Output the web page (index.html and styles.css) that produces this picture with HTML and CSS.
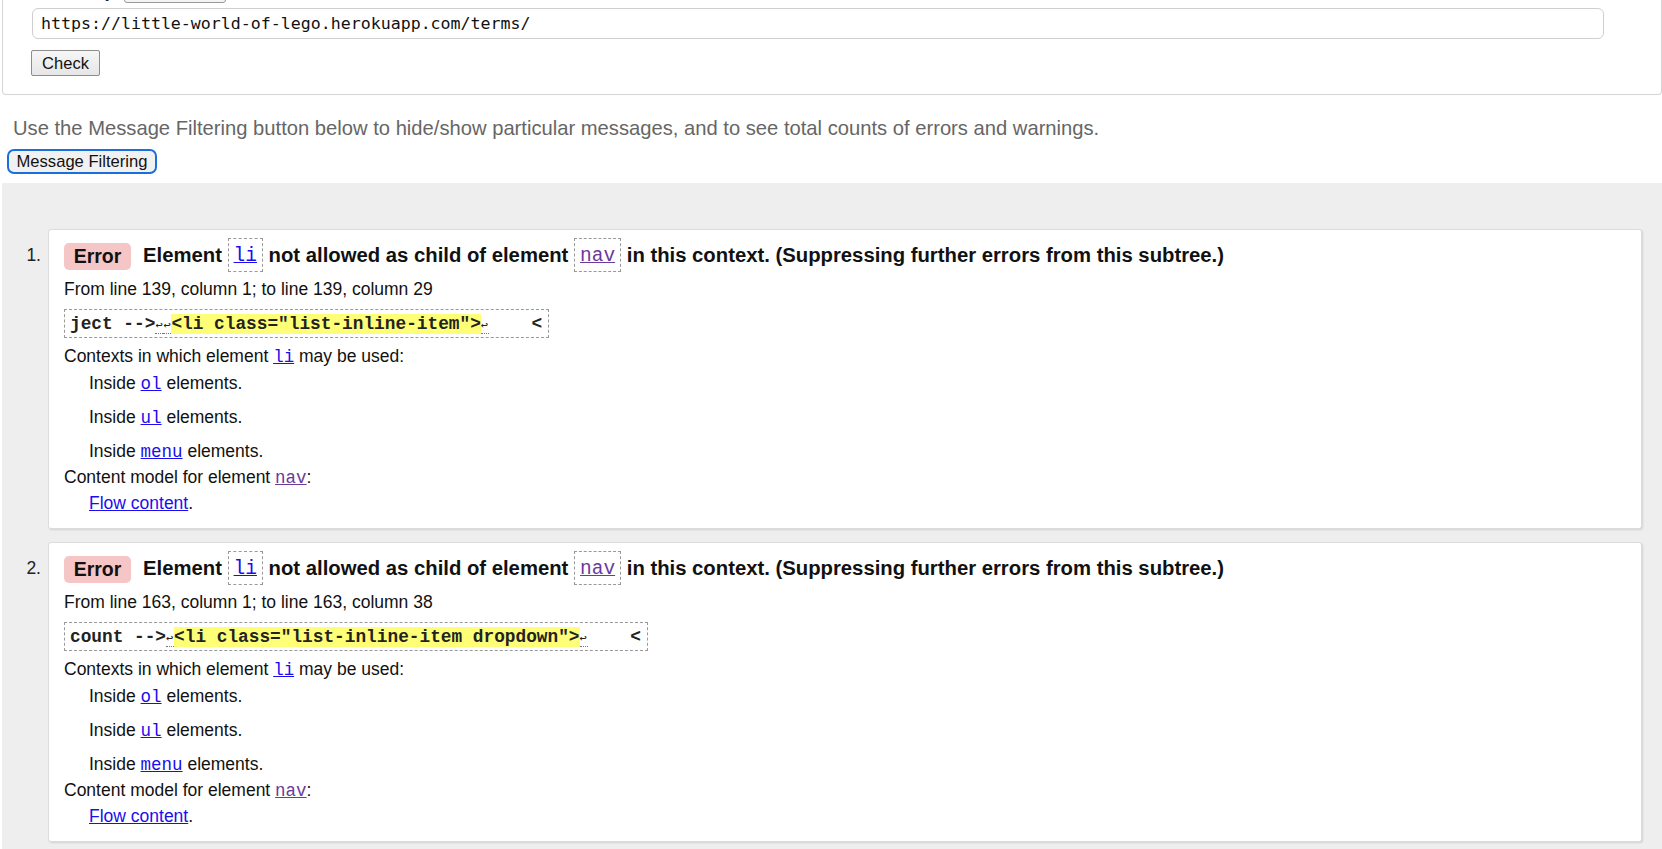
FILE: index.html
```html
<!DOCTYPE html>
<html lang="en">
<head>
<meta charset="utf-8">
<title>Nu Html Checker</title>
<link rel="stylesheet" href="styles.css">
</head>
<body>
<form class="panel">
  <div class="checkby"><span class="checkby-label">Check by</span><span class="checkby-select">address</span></div>
  <div class="url-field">https://little-world-of-lego.herokuapp.com/terms/</div>
  <button type="button" class="check-btn">Check</button>
</form>
<p class="hint">Use the Message Filtering button below to hide/show particular messages, and to see total counts of errors and warnings.</p>
<button type="button" class="filter-btn">Message Filtering</button>
<section class="results">
  <div class="msg-item">
    <div class="num">1.</div>
    <div class="card">
      <div class="title"><span class="badge">Error</span><span class="title-text">Element <code class="ref"><a href="#" class="link">li</a></code> not allowed as child of element <code class="ref"><a href="#" class="link visited">nav</a></code> in this context. (Suppressing further errors from this subtree.)</span></div>
      <div class="loc">From line 139, column 1; to line 139, column 29</div>
      <div class="extract"><code>ject --&gt;<span class="lf">↩</span><span class="lf">↩</span><b class="hl">&lt;li class="list-inline-item"&gt;</b><span class="lf">↩</span>&nbsp;&nbsp;&nbsp;&nbsp;&lt;</code></div>
      <div class="line ctx">Contexts in which element <a href="#" class="mono link">li</a> may be used:</div>
      <div class="line ind first">Inside <a href="#" class="mono link">ol</a> elements.</div>
      <div class="line ind sp">Inside <a href="#" class="mono link">ul</a> elements.</div>
      <div class="line ind sp">Inside <a href="#" class="mono link">menu</a> elements.</div>
      <div class="line model">Content model for element <a href="#" class="mono link visited">nav</a>:</div>
      <div class="line ind flow"><a href="#" class="link">Flow content</a>.</div>
    </div>
  </div>
  <div class="msg-item">
    <div class="num">2.</div>
    <div class="card">
      <div class="title"><span class="badge">Error</span><span class="title-text">Element <code class="ref"><a href="#" class="link">li</a></code> not allowed as child of element <code class="ref"><a href="#" class="link visited">nav</a></code> in this context. (Suppressing further errors from this subtree.)</span></div>
      <div class="loc">From line 163, column 1; to line 163, column 38</div>
      <div class="extract"><code>count --&gt;<span class="lf">↩</span><b class="hl">&lt;li class="list-inline-item dropdown"&gt;</b><span class="lf">↩</span>&nbsp;&nbsp;&nbsp;&nbsp;&lt;</code></div>
      <div class="line ctx">Contexts in which element <a href="#" class="mono link">li</a> may be used:</div>
      <div class="line ind first">Inside <a href="#" class="mono link">ol</a> elements.</div>
      <div class="line ind sp">Inside <a href="#" class="mono link">ul</a> elements.</div>
      <div class="line ind sp">Inside <a href="#" class="mono link">menu</a> elements.</div>
      <div class="line model">Content model for element <a href="#" class="mono link visited">nav</a>:</div>
      <div class="line ind flow"><a href="#" class="link">Flow content</a>.</div>
    </div>
  </div>
</section>
</body>
</html>
```
FILE: styles.css
```css
html, body {
  margin: 0;
  padding: 0;
  background: #fff;
  font-family: "Liberation Sans", Arial, sans-serif;
  color: #111;
}
body {
  overflow: hidden;
  height: 849px;
}
.panel {
  margin: 0 0 0 2px;
  border: 1px solid #d4d4d4;
  border-top: none;
  border-radius: 0 0 4px 4px;
  padding: 0 0 18px 0;
  display: flex;
  flex-direction: column;
  align-items: flex-start;
}
.checkby {
  margin-top: -22px;
  height: 25px;
  display: flex;
  align-items: flex-end;
  padding-left: 40px;
  font-size: 17px;
}
.checkby-label {
  margin-right: 10px;
  color: #222;
}
.checkby-select {
  display: inline-block;
  width: 100px;
  height: 23px;
  border: 1px solid #999;
  border-radius: 3px;
  background: #f4f4f4;
  font-size: 14px;
  color: transparent;
}
.url-field {
  margin: 5px 0 0 29px;
  box-sizing: border-box;
  width: 1572px;
  height: 31px;
  border: 1px solid #cfcfcf;
  border-radius: 6px;
  padding: 0 8px;
  font-family: "DejaVu Sans Mono", monospace;
  font-size: 16.6px;
  line-height: 29px;
  color: #111;
}
.check-btn {
  margin: 11px 0 0 28px;
  box-sizing: border-box;
  width: 69px;
  height: 26px;
  padding: 0;
  border: 1px solid #8d8d8d;
  border-radius: 2px;
  background: linear-gradient(#f6f6f6, #e6e6e6);
  font-family: "Liberation Sans", Arial, sans-serif;
  font-size: 16.5px;
  color: #111;
}
.hint {
  margin: 21px 0 0 13px;
  font-size: 20.2px;
  line-height: 24px;
  color: #666;
}
.filter-btn {
  display: block;
  margin: 9px 0 0 7px;
  box-sizing: border-box;
  width: 150px;
  height: 25px;
  padding: 0;
  border: 2px solid #1b6fdc;
  border-radius: 7px;
  background: #f1f1f1;
  font-family: "Liberation Sans", Arial, sans-serif;
  font-size: 16.6px;
  color: #111;
}
.results {
  margin: 9px 0 0 2px;
  background: #eeeeee;
  padding: 46px 20px 20px 0;
  display: flex;
  flex-direction: column;
  gap: 13px;
}
.msg-item {
  display: flex;
  align-items: flex-start;
}
.num {
  box-sizing: border-box;
  width: 46px;
  padding: 16px 7px 0 0;
  text-align: right;
  font-size: 17.5px;
  line-height: 20px;
  color: #222;
}
.card {
  flex: 1;
  display: flex;
  flex-direction: column;
  align-items: flex-start;
  background: #fff;
  border: 1px solid #dcdcdc;
  border-radius: 3px;
  box-shadow: 1px 1px 2px rgba(0,0,0,0.12);
  padding: 10px 15px 13px 15px;
  font-size: 17.5px;
  color: #111;
}
.title {
  display: flex;
  align-items: center;
  height: 32px;
}
.badge {
  display: inline-block;
  box-sizing: border-box;
  width: 67px;
  height: 27px;
  line-height: 27px;
  text-align: center;
  background: #f6c6c6;
  border-radius: 5px;
  font-weight: bold;
  font-size: 19.5px;
  color: #111;
  margin-right: 12px;
}
.title-text {
  font-weight: bold;
  font-size: 20.3px;
  color: #111;
  white-space: nowrap;
}
.ref {
  display: inline-block;
  border: 1px dashed #999;
  padding: 6px 5px 6px;
  line-height: 18px;
  font-weight: normal;
  vertical-align: middle;
  margin-top: -3px;
}
.ref a {
  font-family: "Liberation Mono", "Courier New", monospace;
  font-size: 19.5px;
}
.mono {
  font-family: "Liberation Mono", "Courier New", monospace;
  font-size: 17.5px;
}
.link {
  color: #1a0dee;
  text-decoration: underline;
}
.link.visited {
  color: #6a3a9c;
}
.loc {
  margin-top: 5px;
  line-height: 24px;
}
.extract {
  margin-top: 8px;
  border: 1px dashed #999;
  padding: 0 6px 0 5px;
  height: 27px;
  line-height: 27px;
}
.extract code {
  font-family: "Liberation Mono", "Courier New", monospace;
  font-size: 17.8px;
  font-weight: bold;
  white-space: pre;
  color: #222;
}
.hl {
  background: #ffff77;
  font-weight: bold;
}
.lf {
  display: inline-block;
  width: 8px;
  line-height: 14px;
  font-size: 12px;
  border-bottom: 1px dotted #777;
  font-weight: normal;
}
.line {
  line-height: 24px;
}
.ctx {
  margin-top: 6px;
}
.ind {
  padding-left: 25px;
}
.first {
  margin-top: 2px;
}
.sp {
  margin-top: 9px;
}
.model {
  margin-top: 1px;
}
.flow {
  margin-top: 1px;
}
```
